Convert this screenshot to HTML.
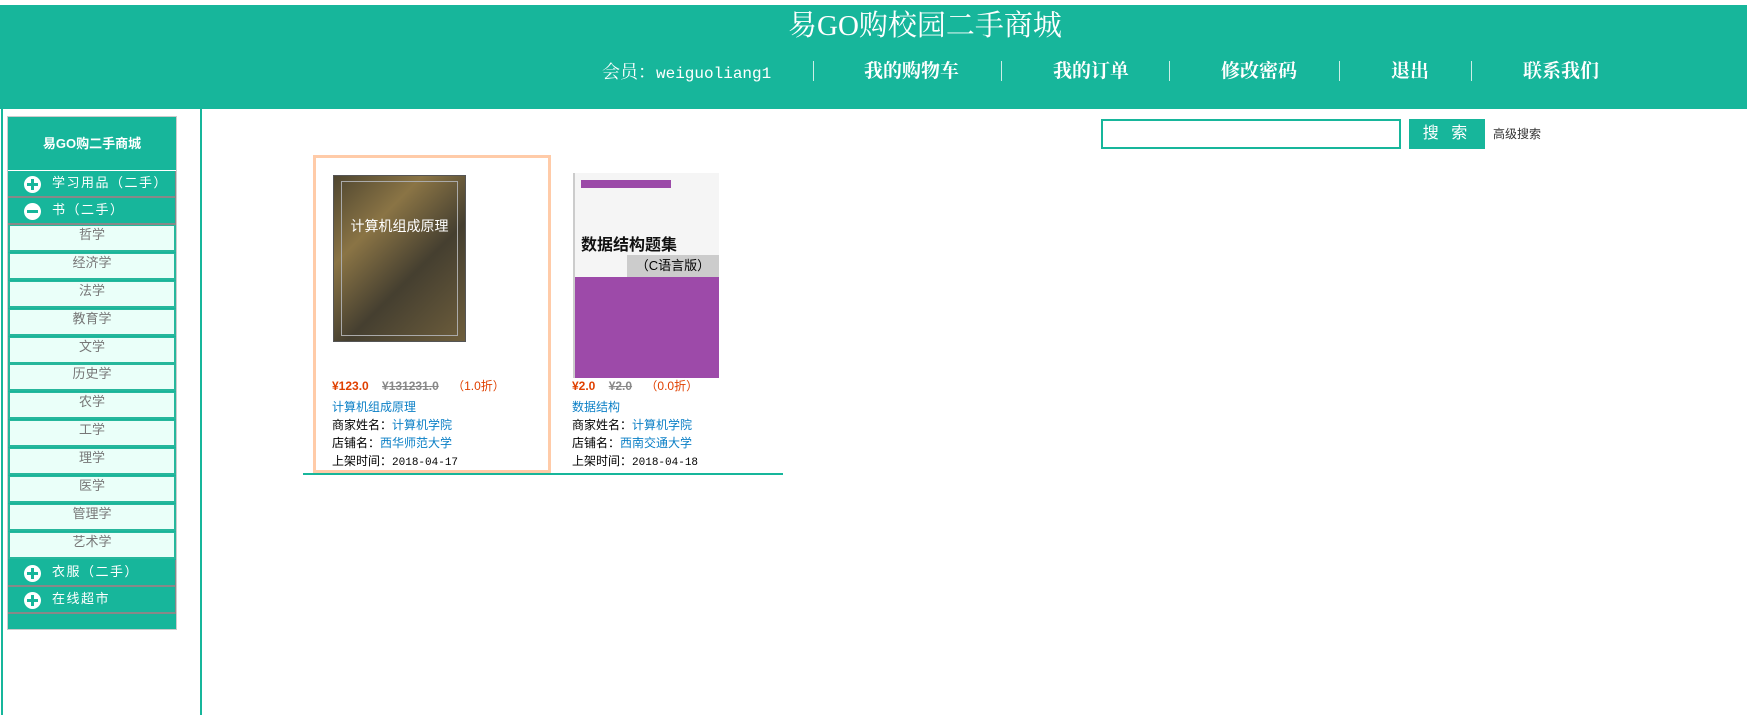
<!DOCTYPE html>
<html><head><meta charset="utf-8"><style>
*{margin:0;padding:0;box-sizing:border-box}
body{width:1747px;height:715px;background:#fff;position:relative;overflow:hidden;font-family:"Liberation Sans","Noto Sans CJK SC",sans-serif}
.a{position:absolute}
.hdr{left:0;top:5px;width:1747px;height:104px;background:#17b69b}
.t{color:#fff;font-family:"Liberation Serif","Noto Serif CJK SC",serif;white-space:nowrap}
.nav{top:60px;font-size:19px;font-weight:bold;line-height:24px}
.sep{top:61px;width:1px;height:20px;background:#cdeee6}
.sb{left:7px;top:116px;width:170px;height:514px;background:#17b69b;border:1px solid #ccc}
.row{left:8px;width:168px;height:27px;background:#17b69b;border-bottom:2px solid #888;border-right:1px solid #888;color:#fff;font-size:13px;letter-spacing:1.5px;line-height:24px}
.row span{position:absolute;left:44px;top:0px}
.ic{position:absolute;left:16px;top:5px;width:17px;height:17px;border-radius:50%;background:#fff}
.ic:before{content:"";position:absolute;left:3px;top:7px;width:11px;height:3px;background:#17b69b}
.ic.p:after{content:"";position:absolute;left:7px;top:3px;width:3px;height:11px;background:#17b69b}
.it{left:8px;width:168px;height:27px;background:#eafff9;border:1px solid #27b79c;border-width:1px 2px 2px 2px;color:#777;font-size:13px;text-align:center;line-height:18px}
.p{font-size:12px;line-height:18px;white-space:nowrap;color:#000}
.bl{color:#0a7fc6}
.m{font-family:"Liberation Mono",monospace;font-size:11px}
</style></head><body>
<div class="a hdr"></div>
<div class="a t" style="left:788px;top:8px;font-size:29px;line-height:36px">易GO购校园二手商城</div>
<div class="a t nav" style="left:602px;font-weight:normal;font-size:18px">会员：<span style="font-family:'Liberation Mono',monospace;font-size:16px">weiguoliang1</span></div>
<div class="a sep" style="left:813px"></div>
<div class="a t nav" style="left:864px">我的购物车</div>
<div class="a sep" style="left:1001px"></div>
<div class="a t nav" style="left:1053px">我的订单</div>
<div class="a sep" style="left:1169px"></div>
<div class="a t nav" style="left:1221px">修改密码</div>
<div class="a sep" style="left:1339px"></div>
<div class="a t nav" style="left:1391px">退出</div>
<div class="a sep" style="left:1471px"></div>
<div class="a t nav" style="left:1523px">联系我们</div>

<div class="a" style="left:1px;top:109px;width:2px;height:606px;background:#17b69b"></div>
<div class="a" style="left:200px;top:109px;width:2px;height:606px;background:#17b69b"></div>

<div class="a sb"></div>
<div class="a" style="left:8px;top:117px;width:168px;height:54px;color:#fff;font-weight:bold;font-size:13px;text-align:center;line-height:54px;border-bottom:1px solid #fff">易GO购二手商城</div>
<div class="a row" style="top:171px"><i class="ic p"></i><span>学习用品（二手）</span></div>
<div class="a row" style="top:198px"><i class="ic"></i><span>书（二手）</span></div>
<div class="a it" style="top:225px">哲学</div>
<div class="a it" style="top:253px">经济学</div>
<div class="a it" style="top:281px">法学</div>
<div class="a it" style="top:309px">教育学</div>
<div class="a it" style="top:337px">文学</div>
<div class="a it" style="top:364px">历史学</div>
<div class="a it" style="top:392px">农学</div>
<div class="a it" style="top:420px">工学</div>
<div class="a it" style="top:448px">理学</div>
<div class="a it" style="top:476px">医学</div>
<div class="a it" style="top:504px">管理学</div>
<div class="a it" style="top:532px">艺术学</div>
<div class="a row" style="top:560px"><i class="ic p"></i><span>衣服（二手）</span></div>
<div class="a row" style="top:587px"><i class="ic p"></i><span>在线超市</span></div>

<div class="a" style="left:1101px;top:119px;width:300px;height:30px;border:2px solid #17b69b"></div>
<div class="a" style="left:1409px;top:119px;width:76px;height:30px;background:#17b69b;color:#fff;font-size:16px;text-align:center;line-height:30px;letter-spacing:4px">搜 索</div>
<div class="a p" style="left:1493px;top:125px;color:#333">高级搜索</div>

<div class="a" style="left:313px;top:155px;width:238px;height:318px;border:3px solid #ffcba8"></div>
<div class="a" style="left:333px;top:175px;width:133px;height:167px;background:linear-gradient(135deg,#4f4630,#8a7445 30%,#453f30 60%,#6e5e3c);border:1px solid #555">
<div style="position:absolute;left:7px;top:5px;right:7px;bottom:5px;border:1px solid #aaa"></div>
<div style="position:absolute;left:0;right:0;top:40px;text-align:center;color:#fff;font-size:14px">计算机组成原理</div></div>
<div class="a" style="left:573px;top:173px;width:146px;height:205px;background:#f5f5f5;border-left:2px solid #ccc">
<div style="position:absolute;left:6px;top:7px;width:90px;height:8px;background:#9b4aa8"></div>
<div style="position:absolute;left:6px;top:58px;font-size:16px;font-weight:bold;color:#111">数据结构题集</div>
<div style="position:absolute;left:52px;top:82px;right:0;height:22px;background:#ccc;font-size:13px;text-align:center;line-height:22px">（C语言版）</div>
<div style="position:absolute;left:0;top:104px;right:0;bottom:0;background:#9d4aa9"></div></div>

<div class="a p" style="left:332px;top:377px"><b style="color:#e04000">¥123.0</b>&nbsp;&nbsp;&nbsp;&nbsp;<s style="color:#888;font-weight:bold">¥131231.0</s>&nbsp;&nbsp;&nbsp;&nbsp;<span style="color:#e04000">（1.0折）</span></div>
<div class="a p bl" style="left:332px;top:398px">计算机组成原理</div>
<div class="a p" style="left:332px;top:416px">商家姓名：<span class="bl">计算机学院</span></div>
<div class="a p" style="left:332px;top:434px">店铺名：<span class="bl">西华师范大学</span></div>
<div class="a p" style="left:332px;top:452px">上架时间：<span class="m">2018-04-17</span></div>

<div class="a p" style="left:572px;top:377px"><b style="color:#e04000">¥2.0</b>&nbsp;&nbsp;&nbsp;&nbsp;<s style="color:#888;font-weight:bold">¥2.0</s>&nbsp;&nbsp;&nbsp;&nbsp;<span style="color:#e04000">（0.0折）</span></div>
<div class="a p bl" style="left:572px;top:398px">数据结构</div>
<div class="a p" style="left:572px;top:416px">商家姓名：<span class="bl">计算机学院</span></div>
<div class="a p" style="left:572px;top:434px">店铺名：<span class="bl">西南交通大学</span></div>
<div class="a p" style="left:572px;top:452px">上架时间：<span class="m">2018-04-18</span></div>

<div class="a" style="left:303px;top:473px;width:480px;height:2px;background:#17b69b"></div>
</body></html>
